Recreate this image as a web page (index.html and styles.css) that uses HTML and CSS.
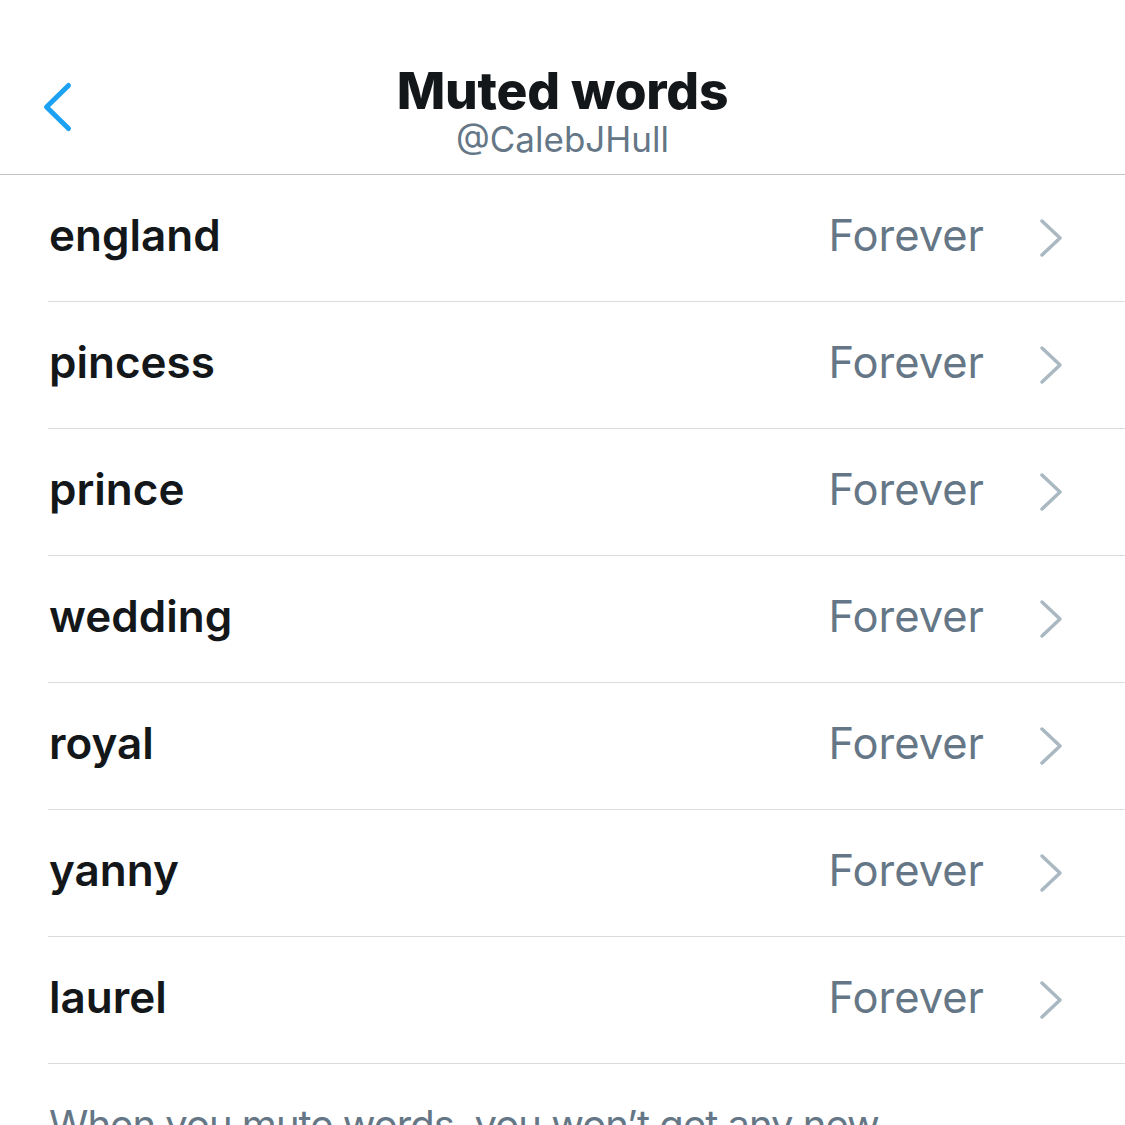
FILE: index.html
```html
<!DOCTYPE html>
<html>
<head>
<meta charset="utf-8">
<link rel="stylesheet" href="styles.css">
</head>
<body>
<div class="screen">
  <header class="header">
    <div class="back">
      <svg width="40" height="60" viewBox="0 0 40 60"><path d="M28.5 8.5 L6.5 30 L28.5 51.5" fill="none" stroke="#1DA1F2" stroke-width="5" stroke-linecap="round" stroke-linejoin="round"/></svg>
    </div>
    <div class="titles">
      <div class="title">Muted words</div>
      <div class="subtitle">@CalebJHull</div>
    </div>
  </header>
  <ul class="list">
    <li class="row"><span class="word">england</span><span class="dur">Forever</span><span class="chev"><svg width="26" height="40" viewBox="0 0 26 40"><path d="M4 3 L22 20 L4 37" fill="none" stroke="#AAB8C2" stroke-width="3.5" stroke-linecap="round" stroke-linejoin="round"/></svg></span></li>
    <li class="row"><span class="word">pincess</span><span class="dur">Forever</span><span class="chev"><svg width="26" height="40" viewBox="0 0 26 40"><path d="M4 3 L22 20 L4 37" fill="none" stroke="#AAB8C2" stroke-width="3.5" stroke-linecap="round" stroke-linejoin="round"/></svg></span></li>
    <li class="row"><span class="word">prince</span><span class="dur">Forever</span><span class="chev"><svg width="26" height="40" viewBox="0 0 26 40"><path d="M4 3 L22 20 L4 37" fill="none" stroke="#AAB8C2" stroke-width="3.5" stroke-linecap="round" stroke-linejoin="round"/></svg></span></li>
    <li class="row"><span class="word">wedding</span><span class="dur">Forever</span><span class="chev"><svg width="26" height="40" viewBox="0 0 26 40"><path d="M4 3 L22 20 L4 37" fill="none" stroke="#AAB8C2" stroke-width="3.5" stroke-linecap="round" stroke-linejoin="round"/></svg></span></li>
    <li class="row"><span class="word">royal</span><span class="dur">Forever</span><span class="chev"><svg width="26" height="40" viewBox="0 0 26 40"><path d="M4 3 L22 20 L4 37" fill="none" stroke="#AAB8C2" stroke-width="3.5" stroke-linecap="round" stroke-linejoin="round"/></svg></span></li>
    <li class="row"><span class="word">yanny</span><span class="dur">Forever</span><span class="chev"><svg width="26" height="40" viewBox="0 0 26 40"><path d="M4 3 L22 20 L4 37" fill="none" stroke="#AAB8C2" stroke-width="3.5" stroke-linecap="round" stroke-linejoin="round"/></svg></span></li>
    <li class="row"><span class="word">laurel</span><span class="dur">Forever</span><span class="chev"><svg width="26" height="40" viewBox="0 0 26 40"><path d="M4 3 L22 20 L4 37" fill="none" stroke="#AAB8C2" stroke-width="3.5" stroke-linecap="round" stroke-linejoin="round"/></svg></span></li>
  </ul>
  <p class="note">When you mute words, you won’t get any new</p>
</div>
</body>
</html>
```
FILE: styles.css
```css
* { box-sizing: border-box; }
html, body { margin: 0; padding: 0; background: #fff; }
body { font-family: Inter, "Liberation Sans", sans-serif; -webkit-font-smoothing: antialiased; }
.screen { width: 1125px; height: 1125px; overflow: hidden; position: relative; }
.header {
  height: 175px;
  border-bottom: 1px solid #c3c3c6;
  position: relative;
  display: flex;
  justify-content: center;
}
.back { position: absolute; left: 40px; top: 77px; }
.back svg { display: block; }
.titles { display: flex; flex-direction: column; align-items: center; padding-top: 60px; }
.title { font-size: 51.5px; font-weight: 800; color: #14171a; line-height: 60px; letter-spacing: -0.2px; }
.subtitle { font-size: 35px; color: #657786; line-height: 38px; margin-top: 0; }
.list { list-style: none; margin: 0; padding: 0 0 0 48px; }
.row {
  height: 127px;
  border-bottom: 1px solid #dadde0;
  display: flex;
  align-items: center;
}
.word { font-size: 44px; font-weight: 600; color: #14171a; flex: 1; padding-left: 1px; padding-bottom: 6px; }
.dur { font-size: 43.5px; color: #657786; padding-bottom: 6px; }
.chev { width: 26px; margin-left: 54px; margin-right: 61px; display: flex; padding-top: 0; }
.chev svg { display: block; }
.note { margin: 0; padding: 36px 0 0 49px; font-size: 40px; color: #657786; letter-spacing: -1px; white-space: nowrap; }
```
